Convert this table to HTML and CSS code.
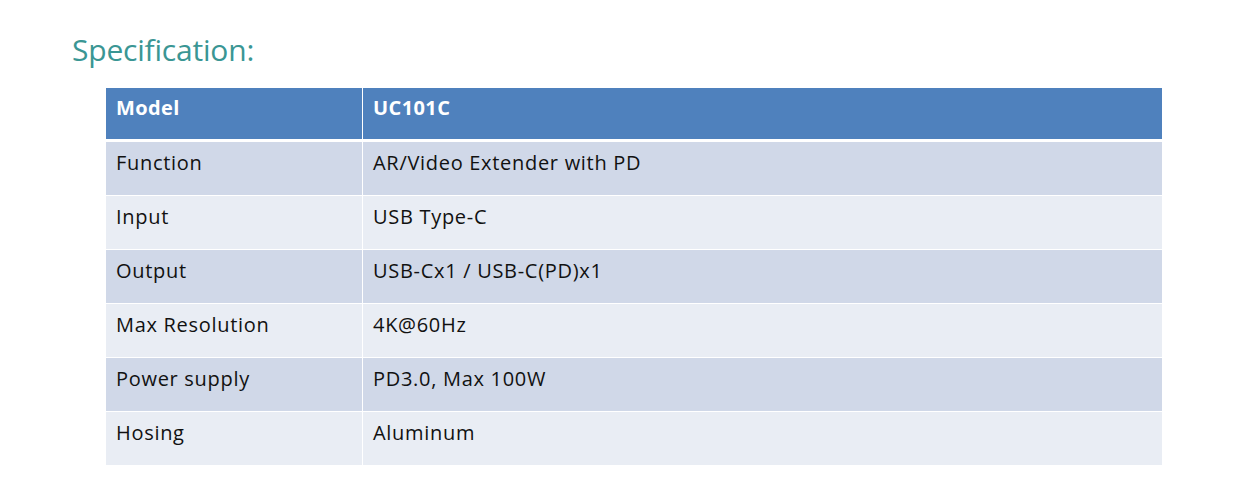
FILE: index.html
```html
<!DOCTYPE html>
<html>
<head>
<meta charset="utf-8">
<link rel="stylesheet" href="styles.css">
</head>
<body>
<div class="page">
  <h1 class="title">Specification:</h1>
  <table class="spec">
    <thead>
      <tr><th class="c1">Model</th><th class="c2">UC101C</th></tr>
    </thead>
    <tbody>
      <tr class="odd"><td class="c1">Function</td><td>AR/Video Extender with PD</td></tr>
      <tr class="even"><td class="c1">Input</td><td>USB Type-C</td></tr>
      <tr class="odd"><td class="c1">Output</td><td>USB-Cx1 / USB-C(PD)x1</td></tr>
      <tr class="even"><td class="c1">Max Resolution</td><td>4K@60Hz</td></tr>
      <tr class="odd"><td class="c1">Power supply</td><td>PD3.0, Max 100W</td></tr>
      <tr class="even"><td class="c1">Hosing</td><td>Aluminum</td></tr>
    </tbody>
  </table>
</div>
</body>
</html>
```
FILE: styles.css
```css
html, body {
  margin: 0;
  padding: 0;
  background: #ffffff;
}
body {
  font-family: "Open Sans", "Noto Sans", sans-serif;
  color: #111;
}
.page {
  padding: 30px 0 0 72px;
}
.title {
  margin: 0;
  font-weight: 400;
  font-size: 30px;
  line-height: 40px;
  color: #3a9694;
  letter-spacing: -0.2px;
}
.spec {
  margin: 18px 0 0 34px;
  width: 1056px;
  border-collapse: collapse;
  font-size: 20px;
  letter-spacing: 0.7px;
}
.spec th, .spec td {
  text-align: left;
  vertical-align: top;
  padding: 7px 10px 0 10px;
  line-height: 28px;
}
.spec th {
  background: #4f81bd;
  color: #ffffff;
  font-weight: 700;
  letter-spacing: 0.4px;
  height: 45px;
  padding-top: 6px;
}
.spec thead tr {
  border-bottom: 3px solid #fff;
}
.spec tbody tr {
  border-bottom: 1px solid #fff;
}
.spec tbody tr:last-child {
  border-bottom: none;
}
.spec td {
  height: 46px;
}
.spec .c1 {
  width: 236px;
  border-right: 1px solid #fff;
}
.spec .odd td { background: #d0d8e8; }
.spec .even td { background: #e9edf4; }
```
